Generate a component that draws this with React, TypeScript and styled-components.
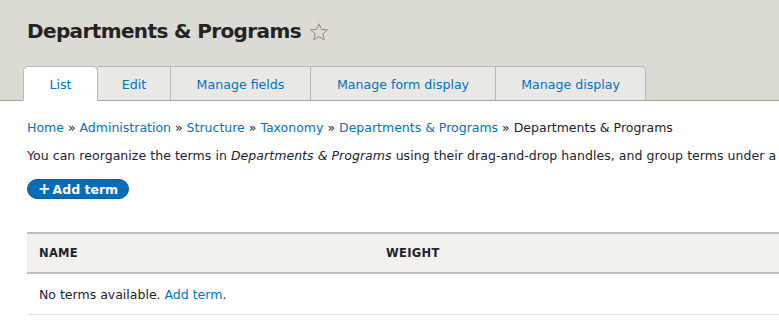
import styled, {createGlobalStyle} from "styled-components";

const GlobalStyle = createGlobalStyle`
    html, body {
        margin: 0;
        padding: 0;
        background: #ffffff;
        overflow: hidden;
    }
    body {
        font-family: "DejaVu Sans", "Lucida Grande", sans-serif;
        color: #222330;
    }
`;

const tabs = ["List", "Edit", "Manage fields", "Manage form display", "Manage display"];
const tabWidths = [75, 73, 140, 185, 150];

const crumbs = ["Home", "Administration", "Structure", "Taxonomy", "Departments & Programs"];

export default function App() {
    return <Page>
        <GlobalStyle/>
        <Header>
            <TitleRow>
                <Title>Departments &amp; Programs</Title>
                <Star viewBox="0 0 20 20">
                    <path d="M10 1.8l2.4 5.6 6 .5-4.6 4 1.4 5.9L10 14.6l-5.2 3.2 1.4-5.9-4.6-4 6-.5z"
                          fill="none" stroke="#8e8c82" strokeWidth="1" strokeLinejoin="round"/>
                </Star>
            </TitleRow>
            <TabList>
                {tabs.map((t, i) =>
                    <Tab key={t} $active={i === 0} $first={i === 0} $last={i === tabs.length - 1} $w={tabWidths[i]}>
                        {t}
                    </Tab>
                )}
            </TabList>
        </Header>
        <Content>
            <Breadcrumb>
                {crumbs.map(c => <span key={c}><Link href="#">{c}</Link><Sep> » </Sep></span>)}
                <span>Departments &amp; Programs</span>
            </Breadcrumb>
            <Description>
                You can reorganize the terms in <em>Departments &amp; Programs</em> using their drag-and-drop handles, and group terms under a parent term by sliding them under and to the right of the parent.
            </Description>
            <AddButton href="#"><Plus>+</Plus>Add term</AddButton>
            <Table>
                <thead>
                <tr>
                    <Th $w={323}>Name</Th>
                    <Th>Weight</Th>
                </tr>
                </thead>
                <tbody>
                <tr>
                    <Td colSpan={2}>No terms available. <Link href="#">Add term</Link>.</Td>
                </tr>
                </tbody>
            </Table>
        </Content>
    </Page>
}

const Page = styled.div`
    width: 779px;
    height: 323px;
    overflow: hidden;
`;

const Header = styled.div`
    background: #dbdad3;
    padding: 16px 0 0 23px;
    border-bottom: 1px solid #a6a6a6;
`;

const TitleRow = styled.div`
    display: flex;
    align-items: center;
    gap: 8px;
    padding-left: 4px;
    height: 30px;
`;

const Title = styled.h1`
    margin: 0;
    font-size: 20px;
    font-weight: bold;
    color: #232323;
    white-space: nowrap;
    letter-spacing: -0.62px;
`;

const Star = styled.svg`
    width: 20px;
    height: 20px;
    margin-top: 1px;
`;

const TabList = styled.div`
    display: flex;
    margin-top: 20px;
    margin-bottom: -1px;
`;

const Tab = styled.a<{ $active: boolean; $first: boolean; $last: boolean; $w: number }>`
    box-sizing: border-box;
    width: ${p => p.$w}px;
    height: 35px;
    display: flex;
    align-items: center;
    justify-content: center;
    font-size: 12.6px;
    color: #0074bd;
    background: ${p => p.$active ? "#ffffff" : "#e9e8e4"};
    border: 1px solid #b8b8b5;
    border-bottom: ${p => p.$active ? "1px solid #ffffff" : "1px solid #a6a6a6"};
    border-left: ${p => p.$first ? "1px solid #b8b8b5" : "none"};
    border-top-left-radius: ${p => p.$first ? "5px" : "0"};
    border-top-right-radius: ${p => p.$first || p.$last ? "5px" : "0"};
    padding-top: 2px;
    cursor: pointer;
    white-space: nowrap;
`;

const Content = styled.div`
    padding: 18px 0 0 27px;
    font-size: 12.5px;
`;

const Breadcrumb = styled.div`
    white-space: nowrap;
    line-height: 18px;
    color: #222330;
`;

const Link = styled.a`
    color: #0074bd;
    text-decoration: none;
`;

const Sep = styled.span`
    color: #222330;
`;

const Description = styled.p`
    margin: 10px 0 0;
    white-space: nowrap;
    line-height: 18px;
    letter-spacing: 0.05px;
`;

const AddButton = styled.a`
    display: inline-flex;
    align-items: center;
    box-sizing: border-box;
    height: 20px;
    margin-top: 14px;
    padding: 0 10px 0 10px;
    border-radius: 12px;
    background: #0a6bb7;
    border: 1px solid #0a5da0;
    color: #ffffff;
    font-weight: bold;
    font-size: 12.5px;
    text-decoration: none;
`;

const Plus = styled.span`
    margin-right: 2px;
    font-size: 15px;
`;

const Table = styled.table`
    margin-top: 33px;
    width: 752px;
    border-collapse: collapse;
    font-size: 12.5px;
`;

const Th = styled.th<{ $w?: number }>`
    width: ${p => p.$w ? `${p.$w}px` : "auto"};
    text-align: left;
    background: #f2f1ed;
    border-top: 2px solid #bfbfba;
    border-bottom: 2px solid #bfbfba;
    height: 38px;
    padding: 0 12px;
    text-transform: uppercase;
    font-size: 11.5px;
    font-weight: bold;
    color: #222330;
    letter-spacing: 0.3px;
`;

const Td = styled.td`
    height: 40px;
    padding: 0 12px;
    border-bottom: 1px solid #e2e1dc;
    color: #222330;
`;
